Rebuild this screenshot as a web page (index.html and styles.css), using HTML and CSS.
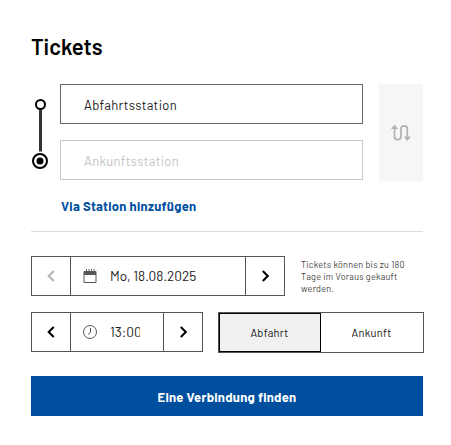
FILE: index.html
```html
<!DOCTYPE html>
<html lang="de">
<head>
<meta charset="utf-8">
<title>Tickets</title>
<link rel="stylesheet" href="styles.css">
</head>
<body>
<main class="tickets">
  <h1 class="title">Tickets</h1>
  <section class="route">
    <svg class="track" width="18" height="97" viewBox="0 0 18 97">
      <path d="M9.500 26v41.500" stroke="#333" stroke-width="3"/>
      <circle cx="9.500" cy="20.500" r="4.500" fill="#fff" stroke="#000" stroke-width="2"/>
      <circle cx="9" cy="77" r="7" fill="#fff" stroke="#000" stroke-width="2"/>
      <circle cx="9" cy="77" r="3.500"/>
    </svg>
    <div class="fields">
      <div class="field"><span class="from">Abfahrtsstation</span></div>
      <div class="field field-muted"><span class="to">Ankunftsstation</span></div>
    </div>
    <button class="swap" aria-label="Tauschen">
      <svg width="20" height="18" viewBox="0 0 20 18">
        <path d="M3.500 5v7.500a3.200 3.200 0 0 0 6.500 0V5a3.100 3.100 0 0 1 6.300 0v8" fill="none" stroke="#b2b2b2" stroke-width="1.700"/>
        <path d="M3.500 .5 7 5H0zM16.300 17l-3.500-4.500h7z" fill="#b2b2b2"/>
      </svg>
    </button>
  </section>
  <a class="via"><span>Via Station hinzufügen</span></a>
  <section class="row">
    <div class="stepper stepper-date">
      <button class="step step-off"><svg width="8" height="12" viewBox="0 0 8 12"><path d="M6.700 1 1.700 6l5 5"/></svg></button>
      <div class="value">
        <svg width="14" height="15" viewBox="0 0 14 15"><path d="M1 2.500h12v11H1z" fill="none" stroke="#555"/><path d="M1 2h12v4H1z" fill="#555"/><path d="M3.500 0v3M6 0v3M8.500 0v3M11 0v3" stroke="#666"/></svg>
        <span class="date">Mo, 18.08.2025</span>
      </div>
      <button class="step"><svg width="8" height="12" viewBox="0 0 8 12"><path d="m1.800 1 5 5-5 5"/></svg></button>
    </div>
    <p class="hint">Tickets können bis zu 180<br>Tage im Voraus gekauft<br>werden.</p>
  </section>
  <section class="row row-time">
    <div class="stepper stepper-time">
      <button class="step"><svg width="8" height="12" viewBox="0 0 8 12"><path d="M6.700 1 1.700 6l5 5"/></svg></button>
      <div class="value">
        <svg width="14" height="14" viewBox="0 0 14 14" fill="none" stroke="#555"><circle cx="7" cy="7" r="6.500"/><path d="M7.500 3v4.500L5 9.500"/></svg>
        <span class="time">13:00</span>
      </div>
      <button class="step"><svg width="8" height="12" viewBox="0 0 8 12"><path d="m1.800 1 5 5-5 5"/></svg></button>
    </div>
    <div class="toggle">
      <button class="option option-on"><span class="dep">Abfahrt</span></button>
      <button class="option"><span class="arr">Ankunft</span></button>
    </div>
  </section>
  <button class="submit"><span>Eine Verbindung finden</span></button>
</main>
</body>
</html>
```
FILE: styles.css
```css
* { box-sizing: border-box; }
body { margin: 0; background: #fff; color: #222; font-family: Barlow, Roboto, sans-serif; }
button { margin: 0; padding: 0; border: 0; background: none; font: inherit; color: inherit; display: flex; align-items: center; justify-content: center; }
svg { display: block; flex: none; }
span { white-space: nowrap; }
.tickets { width: 423px; padding: 32px 0 0 31px; }
.title { margin: 0; height: 52px; font-size: 22px; line-height: 28px; font-weight: 600; color: #000; letter-spacing: .05px; }
.route { display: flex; height: 97px; }
.track { width: 18px; margin-right: 11px; }
.fields { width: 303px; display: grid; grid-template-rows: 40px 40px; gap: 16px; }
.field { border: 1px solid #666; padding: 1px 0 0 23px; display: flex; align-items: center; font-size: 13px; letter-spacing: .3px; }
.field-muted { border-color: #c8c8c8; color: #c4c4c4; }
.swap { width: 44px; height: 97px; margin-left: 16px; background: #f6f6f6; }
.via { display: block; height: 51px; padding: 16px 0 0 30px; border-bottom: 1px solid #ddd; font-size: 13px; line-height: 19px; font-weight: 700; color: #004f9f; letter-spacing: .26px; }
.row { display: flex; margin-top: 24px; }
.row-time { margin-top: 16px; }
.stepper { display: flex; flex: none; height: 40px; border: 1px solid #555; }
.stepper-date { width: 254px; }
.stepper-time { width: 172px; }
.step { width: 38px; }
.step path { fill: none; stroke: #000; stroke-width: 2; }
.step-off path { stroke: #b2b2b2; }
.value { flex: 1; display: flex; align-items: center; gap: 13px; padding-left: 12px; border: solid #555; border-width: 0 1px; font-size: 13.600px; }
.value span { margin-top: -2px; }
.time { width: 30px; overflow: hidden; }
.hint { margin: 3px 0 0 16px; font-size: 9px; line-height: 12px; color: #444; white-space: nowrap; letter-spacing: .25px; }
.toggle { display: flex; flex: none; width: 206px; height: 41px; margin-left: 15px; border: 1px solid #555; }
.option { flex: 1; padding-right: 1px; font-size: 11px; color: #111; letter-spacing: .3px; }
.option-on { flex: 0 0 102px; border: 1px solid #000; background: #f1f1f1; }
.submit { width: 392px; height: 40px; margin-top: 23px; padding-top: 2px; background: #004f9f; color: #fff; font-size: 13px; font-weight: 700; letter-spacing: .26px; }
```
